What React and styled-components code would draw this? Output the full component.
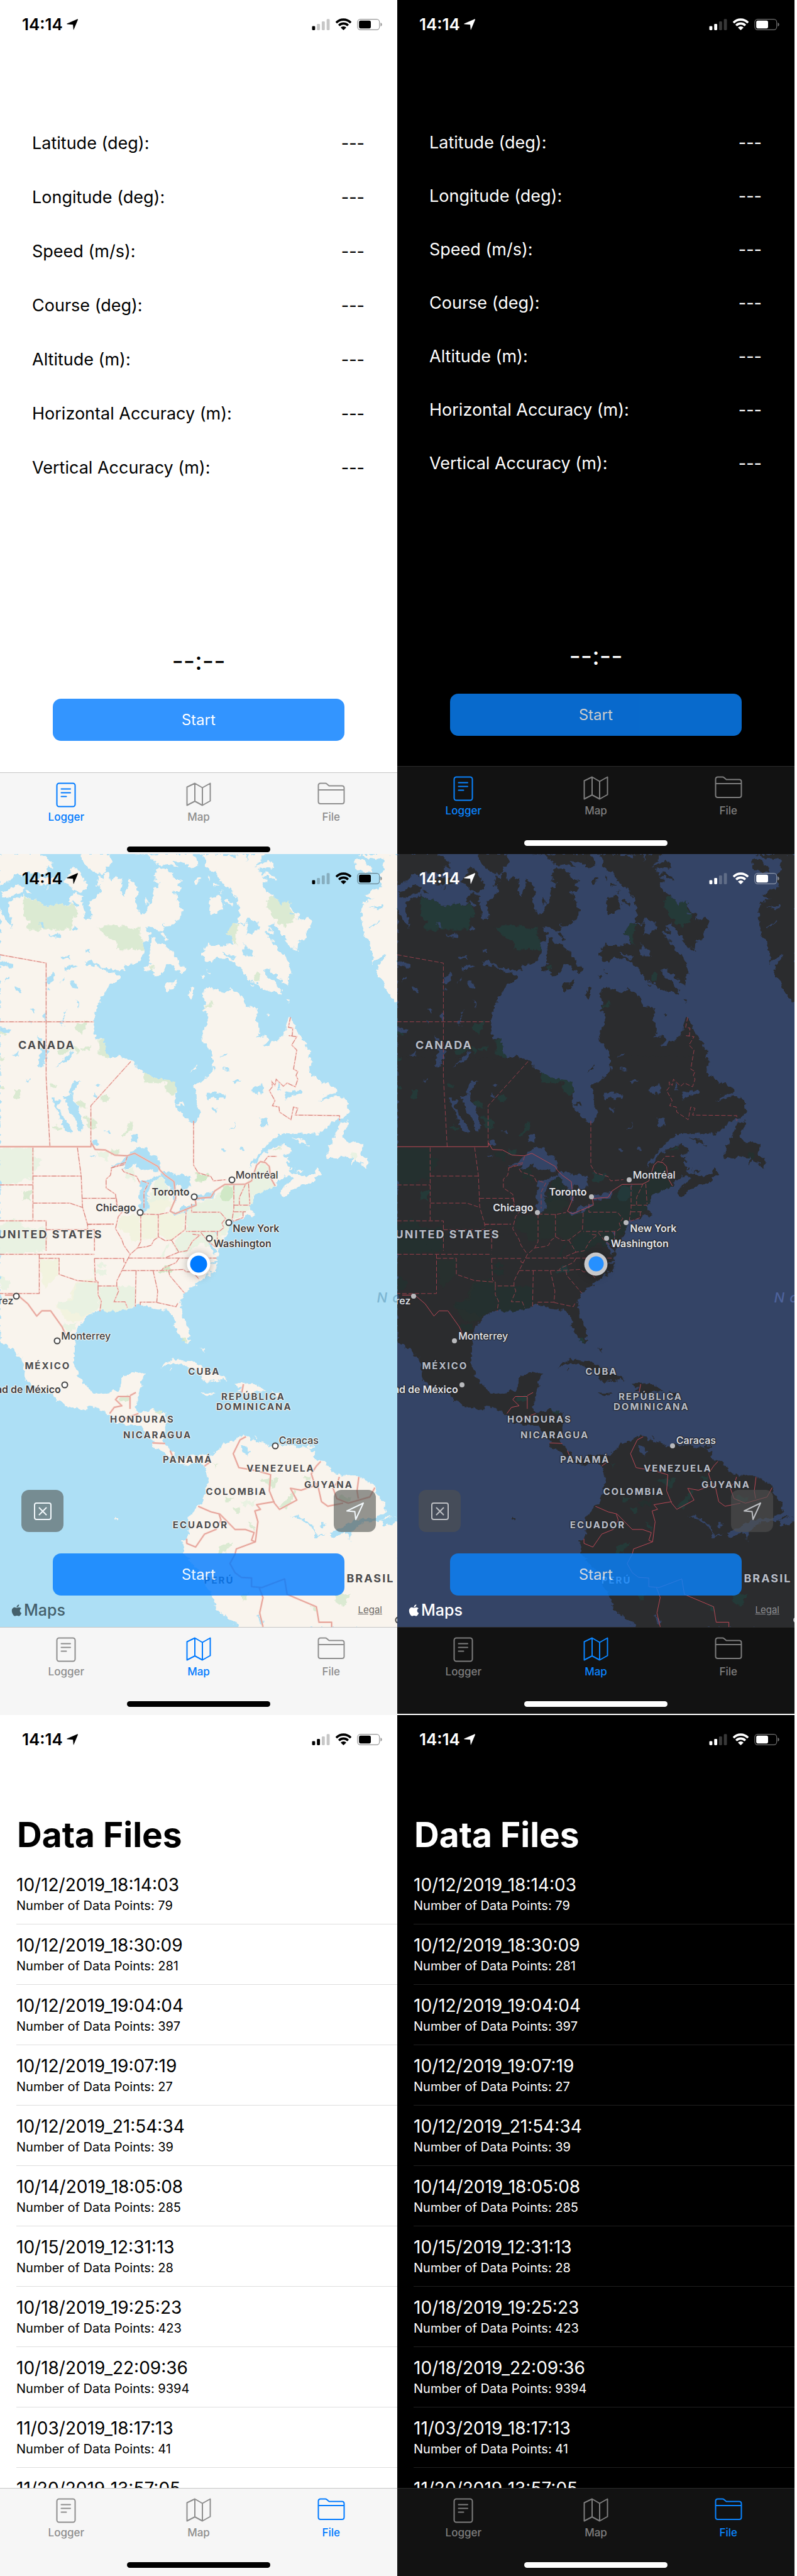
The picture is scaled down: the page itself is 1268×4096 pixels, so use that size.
import React from 'react';
import styled, { createGlobalStyle, ThemeProvider } from 'styled-components';
import { FaApple } from 'react-icons/fa';

const light = {
  bg: '#ffffff', text: '#000000', bar: '#f6f6f6', barLine: '#c6c6c6', line: '#dedede',
  tint: '#007aff', idle: '#8e8e8e', home: '#000000', faint: 'rgba(0,0,0,0.22)', shell: 'rgba(0,0,0,0.42)',
  water: '#addff5', land: '#f9f4ed', park: '#dbead2', mist: '#e9f2e2', straw: '#f2f3df', forest: '#d0e8c6',
  halo: '#f7c9c2', dash: '#cf8078', dashArray: '7 3 2 3', nation: '#f3c4bb', nationWidth: 3, nationDash: '#dd978d',
  country: '#4c4c4e', city: '#3d3d3f', glow: '#fbf7f1', sea: '#7db6d2', control: 'rgba(84,86,84,0.61)',
  controlInk: '#f2f8fb', pinFill: '#ffffff', pinLine: '#444444', pinSize: 11, pinBorder: 2,
  me: '#ffffff', meDot: '#007aff', meSize: 27, brand: '#45606b', legal: '#6f6b67',
};

const dark = {
  bg: '#000000', text: '#ffffff', bar: '#121212', barLine: '#2b2b2b', line: '#202020',
  tint: '#0a84ff', idle: '#7d7d7d', home: '#ffffff', faint: 'rgba(255,255,255,0.22)', shell: 'rgba(255,255,255,0.45)',
  water: '#344466', land: '#2b2c2e', park: '#243a38', mist: '#24302f', straw: '#27302e', forest: '#23393a',
  halo: 'transparent', dash: '#96404b', dashArray: '7 3', nation: 'transparent', nationWidth: 1, nationDash: '#b84855',
  country: '#b9bec8', city: '#e3e5ea', glow: '#25272b', sea: '#4d629b', control: 'rgba(80,80,80,0.62)',
  controlInk: '#bdbfc3', pinFill: '#b9babd', pinLine: '#b9babd', pinSize: 8, pinBorder: 0,
  me: '#c8c8ca', meDot: '#2690ff', meSize: 24, brand: '#ffffff', legal: '#8c8d90',
};

const GlobalStyle = createGlobalStyle`
  *, *::before, *::after { box-sizing: border-box; }
  body { margin: 0; background: #ffffff; font-family: Inter, "Liberation Sans", sans-serif; }
  h1, ul, dl, dd { margin: 0; padding: 0; }
  button { font: inherit; border: 0; padding: 0; cursor: pointer; }
`;

const Gallery = styled.main`
  display: grid;
  grid-template-columns: 1fr 1fr;
  padding-right: 4px;
`;

const Screen = styled.section`
  display: flex;
  flex-direction: column;
  min-width: 0;
  overflow: hidden;
  background: ${p => p.theme.bg};
  color: ${p => p.theme.text};
  border-bottom: ${p => (p.$ruled ? '2px solid #ffffff' : '0')};
`;

/* ---------- status bar ---------- */

const StatusRow = styled.header`
  position: relative;
  display: flex;
  align-items: center;
  justify-content: space-between;
  height: 77px;
  padding: 0 24px 0 35px;
`;

const Clock = styled.div`
  display: flex;
  align-items: center;
  gap: 6px;
  font-size: 26px;
  font-weight: 600;
  line-height: 32px;
`;

const Gauges = styled.div`
  display: flex;
  align-items: center;
  gap: 9px;
`;

const Glyph = styled.svg`
  display: block;
  flex: none;
  fill: currentColor;
`;

const BARS = [[0, 40, 23], [27, 28, 35], [54, 14, 49], [81, 1, 62]];

function StatusBar({ theme, bars }) {
  return (
    <StatusRow>
      <Clock>
        14:14
        <Glyph width="18" height="18" viewBox="0 0 57 57" aria-hidden="true">
          <path d="M55 1q3 1 1 5L36 54q-2 3-2-1L32 29 3 27q-4-1-1-3Z" />
        </Glyph>
      </Clock>
      <Gauges>
        <Glyph width="29" height="18" viewBox="0 0 98 63" aria-hidden="true">
          {BARS.map(([x, y, h], i) => (
            <rect key={x} x={x} y={y} width="17" height={h} rx="5" style={{ fill: i < bars ? theme.text : theme.faint }} />
          ))}
        </Glyph>
        <Glyph width="25" height="19" viewBox="0 0 86 64" aria-hidden="true">
          <path d="M43 0c17 0 32 7 43 18q1 2 0 3l-6 6q-1 1-3 0A49 49 0 0 0 9 27q-2 1-3 0l-6-6q-1-1 0-3A61 61 0 0 1 43 0Z" />
          <path d="M43 22c11 0 20 4 28 11q1 2 0 3l-6 6q-2 1-3 0a29 29 0 0 0-38 0q-1 1-3 0l-6-6q-1-1 0-3c8-7 17-11 28-11Z" />
          <path d="M43 44c5 0 10 2 14 5q1 2 0 3L45 63q-2 2-4 0L29 52q-1-1 0-3c4-3 9-5 14-5Z" />
        </Glyph>
        <Glyph width="40" height="18" viewBox="0 0 138 63" aria-hidden="true">
          <rect x="2" y="2" width="122" height="59" rx="16" style={{ fill: 'none', stroke: theme.shell, strokeWidth: 4 }} />
          <rect x="10" y="10" width="66" height="43" rx="9" />
          <path d="M130 21q8 2 8 10.500t-8 10.500Z" style={{ fill: theme.shell }} />
        </Glyph>
      </Gauges>
    </StatusRow>
  );
}

/* ---------- tab bar ---------- */

const TabShell = styled.nav`
  display: flex;
  flex-direction: column;
  padding-bottom: ${p => p.$inset}px;
  background: ${p => p.theme.bar};
  border-top: 1px solid ${p => p.theme.barLine};
`;

const Tabs = styled.div`
  display: grid;
  grid-template-columns: repeat(3, 1fr);
`;

const Tab = styled.button`
  display: flex;
  flex-direction: column;
  align-items: center;
  gap: 5px;
  padding: 15px 0 0;
  background: none;
  color: ${p => (p.$on ? p.theme.tint : p.theme.idle)};
  font-size: 17px;
  font-weight: 500;
  line-height: 20px;
`;

const TabIcon = styled.svg`
  display: block;
  width: 44px;
  height: 40px;
  fill: none;
  stroke: currentColor;
  stroke-width: 2;
  stroke-linejoin: round;
  stroke-linecap: round;
`;

const HomeBar = styled.span`
  width: 36%;
  height: 9px;
  margin: 37px auto 0;
  border-radius: 5px;
  background: ${p => p.theme.home};
`;

const TABS = [
  ['Logger', <><rect x="7.500" y="1.500" width="29" height="37" rx="3.500" /><path d="M14.500 10.500h14.500M14.500 16.500h14.500M14.500 22.500h8" /></>],
  ['Map', <path d="M3.500 7.500 16 1.500 28 8.500 40.500 1.500V29.500L28 36.500 16 30 3.500 36.500ZM16 1.500V30M28 8.500V36.500" />],
  ['File', <path d="M1.500 5Q1.500 1.500 5 1.500H12.500Q14 1.500 15 2.500L18.500 5.500H39Q42.500 5.500 42.500 9V30.500Q42.500 34 39 34H5Q1.500 34 1.500 30.500ZM1.500 12H42.500" />],
];

function TabBar({ active, inset = 13 }) {
  return (
    <TabShell $inset={inset}>
      <Tabs>
        {TABS.map(([name, art]) => (
          <Tab key={name} type="button" $on={name === active}>
            <TabIcon viewBox="0 0 44 40" aria-hidden="true">{art}</TabIcon>
            {name}
          </Tab>
        ))}
      </Tabs>
      <HomeBar />
    </TabShell>
  );
}

/* ---------- logger ---------- */

const StartButton = styled.button`
  position: relative;
  height: 67px;
  margin: ${p => p.$top}px 84px ${p => p.$bottom}px;
  border-radius: 13px;
  background: ${p => p.theme.tint};
  color: #ffffff;
  opacity: 0.8;
  font-size: 24px;
  line-height: 32px;
`;

const Readings = styled.dl`
  padding: ${p => p.$top}px 52px 0 51px;
`;

const Reading = styled.div`
  display: flex;
  align-items: center;
  justify-content: space-between;
  height: ${p => p.$height}px;
  font-size: 27px;
  line-height: 36px;
`;

const Timer = styled.div`
  margin-top: 242px;
  text-align: center;
  font-size: 40px;
  line-height: 44px;
`;

const FIELDS = ['Latitude (deg):', 'Longitude (deg):', 'Speed (m/s):', 'Course (deg):', 'Altitude (m):', 'Horizontal Accuracy (m):', 'Vertical Accuracy (m):'];

function LoggerScreen({ theme, bars, top, rowHeight, bottom, inset }) {
  return (
    <ThemeProvider theme={theme}>
      <Screen>
        <StatusBar theme={theme} bars={bars} />
        <Readings $top={top}>
          {FIELDS.map(name => (
            <Reading key={name} $height={rowHeight}><dt>{name}</dt><dd>---</dd></Reading>
          ))}
        </Readings>
        <Timer>--:--</Timer>
        <StartButton type="button" $top={38} $bottom={bottom}>Start</StartButton>
        <TabBar active="Logger" inset={inset} />
      </Screen>
    </ThemeProvider>
  );
}

/* ---------- map ---------- */

const MAP_W = 722;
const MAP_H = 1403;

const MapArea = styled.div`
  position: relative;
  display: flex;
  flex-direction: column;
  aspect-ratio: 632 / 1229;
  overflow: hidden;
  background: ${p => p.theme.water};
`;

const Terrain = styled.svg`
  position: absolute;
  inset: 0;
  width: 100%;
  height: 100%;
  fill: none;

  .land { fill: ${p => p.theme.land}; }
  .water { fill: ${p => p.theme.water}; }
  .park { fill: ${p => p.theme.park}; }
  .mist { fill: ${p => p.theme.mist}; }
  .straw { fill: ${p => p.theme.straw}; }
  .forest { fill: ${p => p.theme.forest}; }
  path { vector-effect: non-scaling-stroke; }
  .halo path { stroke: ${p => p.theme.halo}; stroke-width: 2; }
  .dash path { stroke: ${p => p.theme.dash}; stroke-width: 1; stroke-dasharray: ${p => p.theme.dashArray}; }
  .nation path { stroke: ${p => p.theme.nation}; stroke-width: ${p => p.theme.nationWidth}; stroke-linejoin: round; }
  .nationDash path { stroke: ${p => p.theme.nationDash}; stroke-width: 1; }
`;

const A = 'scale(0.33333)';
const B = 'translate(344 0) scale(0.33333)';
const C = 'scale(0.46175 0.45916)';
const D = 'translate(0 690) scale(0.46175 0.56123)';
const E = 'translate(150 510) scale(0.33333)';

const SHAPES = [
  // northern mainland and the western arctic islands
  ['land', A, 'M0 290 20 335 40 365 68 406 60 350 45 320 45 268 65 245 100 238 128 218 165 245 200 250 225 275 265 285 310 270 345 278 385 272 375 235 415 210 445 235 450 275 455 305 465 330 450 345 480 365 495 350 495 315 485 255 515 245 550 200 555 165 530 175 520 140 560 150 570 105 595 100 600 150 635 115 670 155 660 215 677 232 690 180 710 135 750 180 755 225 740 240 745 290 778 335 805 310 830 245 838 185 865 180 868 155 845 140 845 85 880 72 940 100 945 130 988 145 970 170 990 190 985 205 945 200 960 235 992 300 985 345 940 385 905 400 890 378 895 415 850 410 800 390 800 410 822 430 800 480 780 486 700 470 685 445 670 452 710 492 785 503 780 545 760 590 720 605 680 600 680 630 660 635 600 628 520 598 490 582 462 584 475 602 520 605 600 645 650 655 655 685 600 705 585 740 555 775 540 810 515 875 508 940 515 985 525 1010 565 1000 590 1115 650 1100 710 1130 745 1165 0 1165Z'],
  ['land', A, 'M0 0H215L260 25 290 45 290 85 262 70 245 110 160 100 110 115 80 110 60 150 0 165ZM15 205 100 172 127 180 125 210 60 225 50 240 15 230ZM345 150 380 120 385 80 400 68 440 100 470 160 470 190 440 208 400 195 375 170ZM175 135 230 128 300 132 340 150 300 160 240 168 180 155ZM450 0H600L620 35 590 75 555 112 500 90 455 50ZM730 0 810 5 830 40 870 55 965 68 940 30 1000 50 1080 65 1080 40 1060 0ZM147 200 167 208 157 214ZM248 185 262 186 256 196ZM845 450 860 490 890 485 920 520 970 565 975 600 1020 625 1000 650 950 625 930 600 905 610 880 660 850 675 838 660 838 625 800 640 780 635 790 620 820 605 812 590 820 500 830 455ZM905 705 965 690 960 715 905 750ZM1030 770 1045 735 1058 745 1045 795ZM800 235 808 270 795 278 793 240ZM1090 125 1080 160 1060 170 1075 130ZM875 425 895 435 912 465 895 458ZM535 120 565 125 560 150 538 145Z'],
  // Baffin Island, Greenland, Ungava
  ['land', B, 'M0 0 20 10 45 45 40 65 0 70ZM60 0 92 30 92 75 130 90 165 130 165 150 225 190 230 220 260 235 270 290 280 330 260 370 245 380 205 425 235 460 245 492 220 485 185 500 140 500 100 488 70 540 85 575 120 585 155 560 215 575 250 590 285 620 305 660 350 700 385 725 410 740 450 750 500 770 500 740 470 700 430 670 400 630 440 625 470 660 500 690 530 712 545 685 540 650 565 655 545 600 520 545 485 530 460 480 430 450 410 420 455 440 455 420 430 400 465 380 490 420 510 440 530 470 550 510 590 525 595 470 630 470 640 420 670 380 650 345 620 360 590 350 605 325 570 320 560 285 540 265 500 290 480 250 440 215 400 175 395 150 430 150 395 120 475 140 470 120 420 105 370 100 390 70 460 80 450 45 425 30 390 55 355 70 380 40 415 10 415 0Z'],
  ['land', B, 'M115 240 150 225 180 245 180 300 150 322 115 325 105 285ZM195 250 240 262 235 278 195 270ZM100 120 120 125 105 145ZM62 122 55 150 35 170 32 160ZM60 655 90 665 80 677ZM95 635 120 648 112 656ZM525 793 548 798 545 812ZM425 870 437 880 420 892ZM130 160 162 158 130 187ZM172 192 186 215 176 216ZM335 700 352 716 340 718ZM0 740 22 735 22 770 12 795 0 780ZM925 0 1000 30 1055 20 1062 80 1040 110 1050 180 1000 195 955 230 1010 240 950 260 938 310 940 370 945 430 970 465 990 500 1000 560 1003 597 1040 560 1075 545 1040 600 1020 610 1025 650 1060 690 1070 730 1100 780 1140 828V0ZM905 30 950 35 1000 80 1000 100 910 90 905 60ZM75 745 95 722 160 745 200 750 230 732 265 760 300 790 305 825 375 840 360 870 375 930 385 990 365 1000 415 990 430 1015 400 1055 440 1035 500 1000 525 960 530 920 545 890 560 895 580 950 610 1000 650 1060 665 1130 665 1160H130L125 1090 100 1045 60 1000 75 960 100 930 95 880 75 850 90 820 80 790Z'],
  // southern Canada and the northern United States
  ['land', C, 'M0 800 427 808 470 797 515 820 555 857 600 880 640 892 690 905 690 985 710 1020 755 1067 778 1055 787 1020 775 990 773 930 762 913 820 880 838 840 836 800 1212 800 1210 830 1225 870 1260 900 1320 920 1330 945 1290 950 1255 974 1330 955 1365 970 1372 1030 1330 1045 1290 1075 1255 1105 1180 1105 1110 1103 1070 1130 1040 1160 1000 1210 975 1237 1000 1225 1035 1185 1080 1155 1120 1148 1150 1160 1148 1180 1115 1190 1140 1200 1130 1225 1150 1262 1190 1272 1235 1270 1250 1235 1265 1270 1220 1300 1165 1320 1120 1355 1105 1340 1120 1310 1155 1285 1140 1275 1120 1270 1080 1310 1040 1330 1000 1350 985 1385 985 1410 1005 1425 975 1430 900 1460 895 1500 880 1530 860 1560 860 1590H0Z'],
  ['land', C, 'M1375 1055 1340 1060 1310 1130 1290 1175 1283 1200 1340 1200 1385 1200 1385 1235 1400 1205 1420 1225 1445 1242 1450 1205 1420 1190 1425 1145 1380 1140 1345 1120ZM1150 1120 1200 1130 1215 1148 1180 1142ZM1150 1240 1165 1252 1195 1250 1180 1262ZM695 985 720 985 728 998 705 992ZM772 832 770 850 752 862Z'],
  // gulf coast, Mexico, the Caribbean and South America
  ['land', D, 'M0 0H890L850 30 855 70 850 90 855 110 835 125 790 150 740 180 715 200 710 230 725 270 745 310 745 345 735 355 710 330 685 300 685 270 660 245 620 243 600 236 545 225 530 240 500 240 460 250 390 247 350 260 300 310 295 370 290 420 310 460 350 500 375 515 430 510 470 505 485 460 540 442 572 450 550 500 535 560 545 580 600 567 650 580 655 620 640 670 670 700 710 735 750 715 800 712 825 720 865 695 870 680 930 665 965 650 975 655 985 665 1020 668 1060 685 1110 680 1200 690 1240 705 1235 725 1270 735 1320 775 1410 785 1450 800 1480 820 1490 850 1520 880 1510 900 1470 925 1500 925 1530 910 1570 915V1275H950L910 1250 850 1210 840 1180 790 1100 725 1035 718 1000 745 970 740 930 755 900 790 870 815 820 818 770 800 750 780 735 735 750 700 735 670 720 640 700 605 690 600 670 570 640 550 620 480 615 430 585 365 555 330 570 250 550 190 510 150 500 100 470 90 410 55 375 0 345Z'],
  ['land', D, 'M632 432 650 415 700 405 760 415 810 435 850 450 895 470 810 475 790 465 780 445 740 430 700 415 660 422ZM920 482 975 480 1020 490 1045 505 1000 510 960 517 935 505 955 500ZM792 513 815 512 845 518 812 524ZM1065 513 1115 515 1100 526ZM793 362 806 372 810 386ZM670 434 682 436 674 442ZM450 912 468 922 458 926ZM1002 650 1010 658 1004 660ZM1205 682 1235 684 1230 692 1205 692Z'],
  // parks and vegetation
  ['park', A, 'M128 220 150 240 175 248 200 250 225 275 265 285 310 270 345 278 390 275 428 307 400 350 390 410H147L162 372 128 335ZM537 400 575 388 625 388 655 400 680 390 722 412 763 388V445L783 465 778 492 785 503V523L640 517 650 487 562 438ZM415 925 478 912 470 950 440 973 412 960ZM540 1010 565 1000 592 1110 540 1100ZM440 1055 495 1045 490 1070 455 1075ZM320 1065 380 1045 400 1070 312 1097ZM400 1050 430 1060 425 1085ZM0 970 45 968 35 985 0 985ZM0 1095 30 1108 5 1125ZM812 620 838 605 838 640Z'],
  ['park', B, 'M455 228 490 260 500 290 520 255 545 260 550 300 582 345 520 400 515 380 490 385 455 335 425 290 425 250ZM205 425 245 378 268 380V415H255V497L235 460ZM350 670 372 642 388 652 380 690 362 700 350 690ZM72 850 115 805 138 810 100 835Z'],
  ['park', C, 'M567 862 600 880 640 892 690 900V948H652V903H567ZM60 930H80V965H60ZM395 955 430 955 428 980 398 972ZM197 910 230 915 200 928ZM207 1072 245 1080 240 1095 210 1085ZM483 1115 515 1052 528 1090 500 1110ZM300 978 343 980 340 1003 308 1003ZM330 1035 382 1055 375 1087 355 1085ZM768 1262 812 1278 790 1300 770 1290ZM1075 1170 1112 1152 1105 1165 1080 1175ZM435 1170 468 1167 465 1190 440 1190ZM0 912 18 918 15 930 0 930ZM88 1340 125 1330 120 1372 90 1365Z'],
  ['mist', C, 'M0 1160H130V1290L95 1280 70 1300 40 1310 0 1300ZM130 1195 160 1200 155 1240 130 1260ZM490 1245 525 1240 525 1290 500 1280ZM1382 1180 1405 1180 1400 1210 1380 1200ZM0 1470 60 1440 100 1480 182 1480V1568H0ZM380 1175 430 1180 425 1210 385 1195Z'],
  ['mist', E, 'M595 375 720 345 780 270 900 265 930 220 975 155 1015 165 1020 235 1050 280 930 330 915 400 850 440 805 480 780 545 740 560 715 610 640 590 570 640 520 640 490 590 560 520 565 405ZM85 822H290V935L245 945 200 965 95 955ZM365 330 400 245 440 235 465 290 455 320 475 345 440 425 360 430ZM80 700 130 705 125 720 85 715ZM60 735 130 735 125 760 65 758ZM425 660 465 585 470 600 440 665ZM235 185 280 185 290 260 270 230Z'],
  ['straw', E, 'M200 445 315 435V580H275L255 540 200 510ZM320 432H410V560L320 570ZM415 432 480 425 560 405 555 520 490 575 415 550ZM360 360 475 350 490 380 440 425 360 430ZM0 790 50 785 85 805V940L50 965 0 1000ZM735 525 755 530 755 600 740 600Z'],
  ['straw', D, 'M155 85 230 80 232 130 175 175ZM300 155 385 160 390 240 350 260 305 290 250 270 225 225 270 215Z'],
  ['mist', D, 'M310 155 385 160 390 240 330 265 240 240 230 220 280 215ZM245 290 300 290 295 310 270 320ZM0 5 100 10 120 40 150 60 0 62ZM0 135 40 150 30 185 5 180Z'],
  ['forest', E, 'M755 300 780 275 815 280 822 340 790 365 760 350ZM445 715 480 705 482 745 425 750 420 740ZM615 210 690 215 665 255 620 240ZM540 1095 570 1100 562 1130 545 1120Z'],
  ['park', D, 'M465 525H512V540H470ZM605 570 640 570 630 585ZM1020 795 1095 788 1085 820 1065 815ZM1100 885 1160 825 1155 860 1120 890ZM920 885 945 880 945 900 928 905ZM860 1015 890 1000 915 1000 890 1030 862 1033ZM1190 780 1225 785 1215 805ZM1315 1170 1380 1160 1355 1203 1320 1190ZM970 930 1010 950 1000 960ZM1225 1200 1245 1205 1250 1235ZM885 850 925 855 890 865ZM840 740 860 745 850 758ZM950 1170 980 1155 960 1190ZM715 330 740 340 735 354ZM1330 845 1385 850 1380 865 1340 865Z'],
  ['mist', D, 'M950 865 1010 860 1000 875 960 878Z'],
  // lakes and rivers
  ['water', A, 'M392 262 405 255 428 268 420 290 398 285ZM212 372 230 380 245 405 232 405ZM265 440 310 440 312 425 338 445 335 458 290 452ZM400 400 418 388 422 410 402 415ZM465 525 495 518 490 542ZM332 558 385 550 385 575 340 568ZM0 590 20 575 65 600 65 625 40 610 0 605ZM350 625 380 600 422 612 395 622 355 638ZM52 655 50 680 25 695ZM255 675 298 645 298 665 275 710 252 695ZM332 700 350 675 355 695ZM385 705 405 690 420 730 400 725ZM82 725 105 725 118 750 105 758ZM410 792 420 795 435 830 425 828ZM160 838 192 850 185 870ZM372 848 350 860 345 935 325 925 345 880ZM235 870 255 870 258 910 240 900ZM160 900 175 915 158 915ZM0 945 70 958 35 975 0 970ZM212 990 225 1010 205 1055 197 1025ZM70 1098 108 1070 100 1095ZM220 1075 262 1070 240 1140 220 1135ZM390 1075 385 1105 345 1140ZM255 730 275 738 255 748Z'],
  ['water', B, 'M315 350 340 350 385 390 380 410 350 420 318 442 315 390ZM260 372 315 378 315 384 262 378ZM300 490 340 530 348 558 292 550ZM165 1105 212 1080 200 1100ZM215 8 260 5 245 26ZM310 0 322 0 312 48ZM975 290 1045 280 1050 298 1000 292ZM985 400 1040 358 1045 362 990 404ZM180 535 250 560 245 575 190 555ZM545 320 575 325 555 335Z'],
  ['water', C, 'M255 960 280 950 305 1000 325 1060 322 1100 310 1095 300 1050 265 1005ZM208 970 240 970 228 1000 250 1040 285 1090 282 1105 260 1095 235 1045ZM275 945 285 900 310 900 285 955ZM370 945 395 955 375 960ZM375 912 398 910 385 922ZM210 845 285 785 275 812 215 840ZM160 770 182 770 175 835 150 838ZM100 895 122 888 112 905ZM810 950 845 938 890 955 885 968 815 965ZM915 900 945 893 930 908ZM990 930 1035 910 1035 940 1010 950ZM1125 970 1120 940 1180 930 1180 945ZM1088 905 1105 915 1100 935ZM880 845 905 850 895 860ZM865 805 898 785 890 798ZM900 1090 935 1060 915 1085ZM1025 1045 1055 1045 1050 1072 1028 1070ZM832 1010 850 1008 845 1020ZM868 1170 895 1168 885 1178ZM940 1165 958 1162 955 1172ZM410 1092 440 1100 430 1106ZM515 1108 540 1108 540 1140 518 1132ZM360 1135 385 1130 388 1150 362 1155ZM838 838 852 848 838 855ZM355 1190 378 1190 370 1198Z'],
  ['water', E, 'M155 180 205 145 270 95 300 65 350 72 370 110 415 125 425 175 410 197 375 190 335 190 290 175 300 150 260 175 215 187 230 160ZM325 250 345 252 380 235 390 225 440 225 430 235 400 245 375 265 355 320 365 370 355 420 330 432 310 400 310 310 325 280 302 292ZM430 205 480 210 530 215 580 225 600 280 570 280 560 300 530 275 505 290 510 340 500 372 495 330 490 300 455 265 450 240 430 230ZM475 420 530 405 560 385 625 375 590 400 540 420 500 445ZM605 342 640 325 700 318 725 308 715 345 670 350 620 352ZM822 270 830 270 825 320ZM685 580 700 582 715 605 735 640 720 650 700 610ZM725 525 740 525 735 555ZM700 690 730 690 735 700 705 700ZM685 735 715 740 700 745Z'],
  ['water', D, 'M950 680 962 690 980 700 975 712 958 710 952 695ZM1140 915 1180 913 1235 945 1240 968 1285 973 1240 978 1225 950 1180 920ZM1300 970 1390 925 1480 915 1500 905 1500 925 1420 935 1385 965 1375 990 1370 960 1310 982ZM1258 935 1280 940 1270 950ZM1010 1235 1020 1235 1040 1258 1030 1262ZM1500 925 1540 912 1568 915 1540 940 1510 945Z'],
];

const STATE_LINES = [
  [C, 'M0 398 182 431V880L197 1157M0 663H370M515 820 358 995V1150M130 1160V1448M305 1160 320 1273 325 1395 345 1465V1482M130 1273H322M0 1308H130M130 1380H275L325 1397M325 1361H458M345 1463H448M0 1450H182V1568M182 1485H372V1568M762 1055V1230L780 1260 830 1275 840 1292 890 1287M490 1220 440 1240 435 1270 418 1285V1320L455 1345 460 1390M1143 645 1135 685 1152 688 1150 718 1137 718 1168 722 1148 755 1168 775 1155 850 1172 860 1165 875 1172 890 1162 920 1130 905 1115 918 1087 890 1082 915 1070 900 1072 920 1060 935 1082 975 1072 995 1098 1000 1100 1020 1145 1050 1155 1000 1172 1005 1162 1032 1336 1034V1055M1040 1215 1055 1195H1090'],
  [E, 'M215 185 225 200 295 225 315 265M245 115 230 160 155 180M325 250 360 262 335 310V400M25 487 170 485M185 345 190 385 215 420 195 445 180 510 215 570 225 600 260 650M318 430V580L300 615 260 650 215 738 187 795V822L197 850 172 908H232L245 940M300 615 350 608 375 600 390 572 415 555 450 575 485 572 560 515 565 405M413 430V555M318 430 413 433 470 422M485 572 525 638 570 630 600 578 640 545 600 540M525 638 455 667M65 672H225V692L238 695M250 670H730M215 738H430L550 732 565 745H600L635 785M525 672 510 695 440 725 430 738M292 738 288 935M385 738 410 850 405 910H315V925M405 912 510 935 520 915M470 738 475 765 557 862M595 375V420H750L780 455 760 480 770 505 745 525H565M825 275V400L815 465M825 382H912M890 265 855 340V380M905 265 912 375M825 418H890M875 418V450L820 470M645 530 680 575 725 610M735 525V580M65 672 70 790 85 800V822H187M85 822V870L103 905 95 960'],
  [D, 'M0 65H372M155 65V192H0M155 78H233V130L305 150 387 155'],
];

const NATION_LINES = [
  [C, 'M0 1157H358L360 1142 375 1168 415 1170 452 1190 500 1193 530 1183 622 1235 630 1250 650 1270 685 1295 692 1360 670 1412 690 1422 772 1388 768 1362 830 1357 845 1332 885 1306 965 1305 990 1292 1010 1230 1025 1216 1045 1220 1060 1235 1065 1280 1083 1312'],
  [D, 'M20 197H70L110 225 145 265 165 248H200L245 300 258 325M432 580 450 560 480 555 455 535 465 525H512V565M512 522 535 512M480 600 545 580M600 675 650 677M670 700 680 720M968 655 945 665 918 710 940 755 1010 765 1065 778 1060 830 1080 870 1100 890 1168 860 1143 822 1185 828 1250 810 1265 865 1290 880 1350 870M1080 865 1010 875 1025 890 1003 895 1015 930 1005 995 930 1018 925 1035 905 1065 925 1095 950 1110 990 1112V1140L1030 1143 1120 1115 1130 1165 1245 1205 1255 1255H1305V1275M780 880 830 898 865 905 925 955 965 955 1000 965 990 990 1005 995M735 985V1000L770 1012 805 970 850 955 870 925 862 905M1020 1143 1035 1175 1022 1225 1035 1270M1262 735 1245 750 1225 775 1235 800 1250 812M1335 785 1330 800 1310 820 1325 855 1370 870 1455 850 1475 820M1412 785 1405 830 1410 855M805 750 830 735M958 485 952 512'],
];

const lines = set => set.map(([t, d]) => <path key={t} transform={t} d={d} />);

function MapArt({ id }) {
  return (
    <Terrain viewBox={`0 0 ${MAP_W} ${MAP_H}`} preserveAspectRatio="xMidYMid slice" aria-hidden="true">
      <filter id={id} x="0" y="0" width="100%" height="100%" colorInterpolationFilters="sRGB">
        <feTurbulence type="fractalNoise" baseFrequency="0.11" numOctaves="3" seed="7" result="n" />
        <feDisplacementMap in="SourceGraphic" in2="n" scale="12" xChannelSelector="R" yChannelSelector="G" />
      </filter>
      <g filter={`url(#${id})`}>
        <rect className="water" x="-20" y="-20" width="762" height="1443" />
        {SHAPES.map(([kind, t, d], i) => <path key={i} className={kind} transform={t} d={d} />)}
      </g>
      <g className="halo">{lines(STATE_LINES)}</g>
      <g className="dash">{lines(STATE_LINES)}</g>
      <g className="nation">{lines(NATION_LINES)}</g>
      <g className="nationDash">{lines(NATION_LINES)}</g>
    </Terrain>
  );
}

const Spot = styled.span`
  position: absolute;
  left: ${p => (p.$x / MAP_W) * 100}%;
  top: ${p => (p.$y / MAP_H) * 100}%;
`;

const KINDS = {
  country: { size: 15, weight: 700, space: '2px' },
  large: { size: 18, weight: 700, space: '2px' },
  city: { size: 16, weight: 600, space: 'normal' },
  town: { size: 16, weight: 500, space: 'normal' },
  sea: { size: 22, weight: 500, space: '8px' },
};

const PlaceName = styled(Spot)`
  transform: translateY(-50%);
  white-space: nowrap;
  font-size: ${p => KINDS[p.$kind].size}px;
  font-weight: ${p => KINDS[p.$kind].weight};
  letter-spacing: ${p => KINDS[p.$kind].space};
  line-height: 20px;
  font-style: ${p => (p.$kind === 'sea' ? 'italic' : 'normal')};
  color: ${p => (p.$kind === 'sea' ? p.theme.sea : p.$kind === 'city' || p.$kind === 'town' ? p.theme.city : p.theme.country)};
  text-shadow: ${p => (p.$kind === 'sea' ? 'none' : `1px 0 1px ${p.theme.glow}, -1px 0 1px ${p.theme.glow}, 0 1px 1px ${p.theme.glow}, 0 -1px 1px ${p.theme.glow}, 0 0 2px ${p.theme.glow}`)};
`;

const CityPin = styled(Spot)`
  width: ${p => p.theme.pinSize}px;
  height: ${p => p.theme.pinSize}px;
  transform: translate(-50%, -50%);
  border: ${p => p.theme.pinBorder}px solid ${p => p.theme.pinLine};
  border-radius: 50%;
  background: ${p => p.theme.pinFill};
`;

const MyPlace = styled(Spot)`
  display: grid;
  place-items: center;
  width: 37px;
  height: 37px;
  transform: translate(-50%, -50%);
  border-radius: 50%;
  background: ${p => p.theme.me};
  box-shadow: 0 1px 14px rgba(0, 0, 0, 0.3);

  &::after {
    content: '';
    width: ${p => p.theme.meSize}px;
    height: ${p => p.theme.meSize}px;
    border-radius: 50%;
    background: ${p => p.theme.meDot};
  }
`;

const PLACES = [
  ['large', 'CANADA', 33, 347], ['large', 'UNITED STATES', -4, 691],
  ['city', 'Toronto', 276, 613], ['town', 'Montréal', 428, 582], ['city', 'Chicago', 174, 641],
  ['city', 'New York', 423, 679], ['city', 'Washington', 388, 707], ['town', 'rez', -3, 810],
  ['town', 'Monterrey', 111, 874], ['country', 'MÉXICO', 45, 929], ['city', 'ad de México', -7, 971],
  ['country', 'CUBA', 342, 940], ['country', 'REPÚBLICA', 402, 985], ['country', 'DOMINICANA', 393, 1003],
  ['country', 'HONDURAS', 200, 1026], ['country', 'NICARAGUA', 224, 1055], ['country', 'PANAMÁ', 296, 1099],
  ['town', 'Caracas', 507, 1064], ['country', 'VENEZUELA', 448, 1115], ['country', 'COLOMBIA', 374, 1158],
  ['country', 'GUYANA', 553, 1145], ['country', 'ECUADOR', 314, 1218], ['country', 'PERÚ', 371, 1318],
  ['large', 'BRASIL', 630, 1315], ['sea', 'No', 685, 805],
];

const PINS = [[255, 651], [353, 622], [422, 591], [416, 669], [380, 697], [30, 802], [104, 884], [118, 964], [500, 1074], [724, 1390]];

const MapControls = styled.div`
  position: relative;
  display: flex;
  justify-content: space-between;
  margin-top: auto;
  padding: 0 34px;
`;

const MapButton = styled.button`
  display: grid;
  place-items: center;
  width: 67px;
  height: 67px;
  border-radius: 12px;
  background: ${p => p.theme.control};
  color: ${p => p.theme.controlInk};
`;

const ControlIcon = styled.svg`
  display: block;
  width: 30px;
  height: 30px;
  fill: none;
  stroke: currentColor;
  stroke-width: 2;
  stroke-linejoin: round;
  stroke-linecap: round;
`;

const Credits = styled.footer`
  position: relative;
  display: flex;
  align-items: center;
  justify-content: space-between;
  height: 50px;
  padding: 0 24px 4px 16px;
`;

const Brand = styled.span`
  display: flex;
  align-items: center;
  gap: 1px;
  color: ${p => p.theme.brand};
  font-size: 25px;
  font-weight: 500;
  line-height: 32px;
`;

const Legal = styled.a`
  color: ${p => p.theme.legal};
  font-size: 15px;
  line-height: 20px;
`;

function MapScreen({ theme, id, bars, inset, ruled }) {
  return (
    <ThemeProvider theme={theme}>
      <Screen $ruled={ruled}>
        <MapArea>
          <MapArt id={id} />
          {PINS.map(([x, y]) => <CityPin key={y} $x={x} $y={y} />)}
          {PLACES.map(([kind, name, x, y]) => <PlaceName key={name} $kind={kind} $x={x} $y={y}>{name}</PlaceName>)}
          <MyPlace $x={361} $y={744} />
          <StatusBar theme={theme} bars={bars} />
          <MapControls>
            <MapButton type="button" aria-label="Clear track">
              <ControlIcon viewBox="0 0 30 30"><rect x="2" y="2" width="26" height="26" rx="3" /><path d="M9.500 9.500 20.500 20.500M20.500 9.500 9.500 20.500" /></ControlIcon>
            </MapButton>
            <MapButton type="button" aria-label="Centre on my location">
              <ControlIcon viewBox="0 0 30 30"><path d="M28 2 2 14.500 14.500 15.500 16 28Z" /></ControlIcon>
            </MapButton>
          </MapControls>
          <StartButton type="button" $top={34} $bottom={0}>Start</StartButton>
          <Credits>
            <Brand><FaApple size={21} aria-hidden="true" />Maps</Brand>
            <Legal href="#legal">Legal</Legal>
          </Credits>
        </MapArea>
        <TabBar active="Map" inset={inset} />
      </Screen>
    </ThemeProvider>
  );
}

/* ---------- files ---------- */

const Title = styled.h1`
  padding: 79px 27px 13px;
  font-size: 55px;
  font-weight: 700;
  line-height: 68px;
`;

const FileList = styled.ul`
  height: 992px;
  padding-left: 26px;
  overflow: hidden;
  list-style: none;
`;

const FileRow = styled.li`
  height: 96px;
  padding-top: 14px;
  border-bottom: 1px solid ${p => p.theme.line};
`;

const FileName = styled.div`
  font-size: 28px;
  line-height: 38px;
`;

const FileMeta = styled.div`
  font-size: 20px;
  line-height: 28px;
`;

const FILES = [
  ['10/12/2019_18:14:03', 79], ['10/12/2019_18:30:09', 281], ['10/12/2019_19:04:04', 397], ['10/12/2019_19:07:19', 27],
  ['10/12/2019_21:54:34', 39], ['10/14/2019_18:05:08', 285], ['10/15/2019_12:31:13', 28], ['10/18/2019_19:25:23', 423],
  ['10/18/2019_22:09:36', 9394], ['11/03/2019_18:17:13', 41], ['11/20/2019_13:57:05', null],
];

function FilesScreen({ theme }) {
  return (
    <ThemeProvider theme={theme}>
      <Screen>
        <StatusBar theme={theme} bars={2} />
        <Title>Data Files</Title>
        <FileList>
          {FILES.map(([name, count]) => (
            <FileRow key={name}>
              <FileName>{name}</FileName>
              {count !== null && <FileMeta>Number of Data Points: {count}</FileMeta>}
            </FileRow>
          ))}
        </FileList>
        <TabBar active="File" />
      </Screen>
    </ThemeProvider>
  );
}

export default function App() {
  return (
    <>
      <GlobalStyle />
      <Gallery>
        <LoggerScreen theme={light} bars={1} top={108} rowHeight={86} bottom={50} inset={3} />
        <LoggerScreen theme={dark} bars={2} top={107} rowHeight={85} bottom={48} inset={13} />
        <MapScreen theme={light} id="coast-light" bars={1} inset={13} />
        <MapScreen theme={dark} id="coast-dark" bars={2} inset={11} ruled />
        <FilesScreen theme={light} />
        <FilesScreen theme={dark} />
      </Gallery>
    </>
  );
}
